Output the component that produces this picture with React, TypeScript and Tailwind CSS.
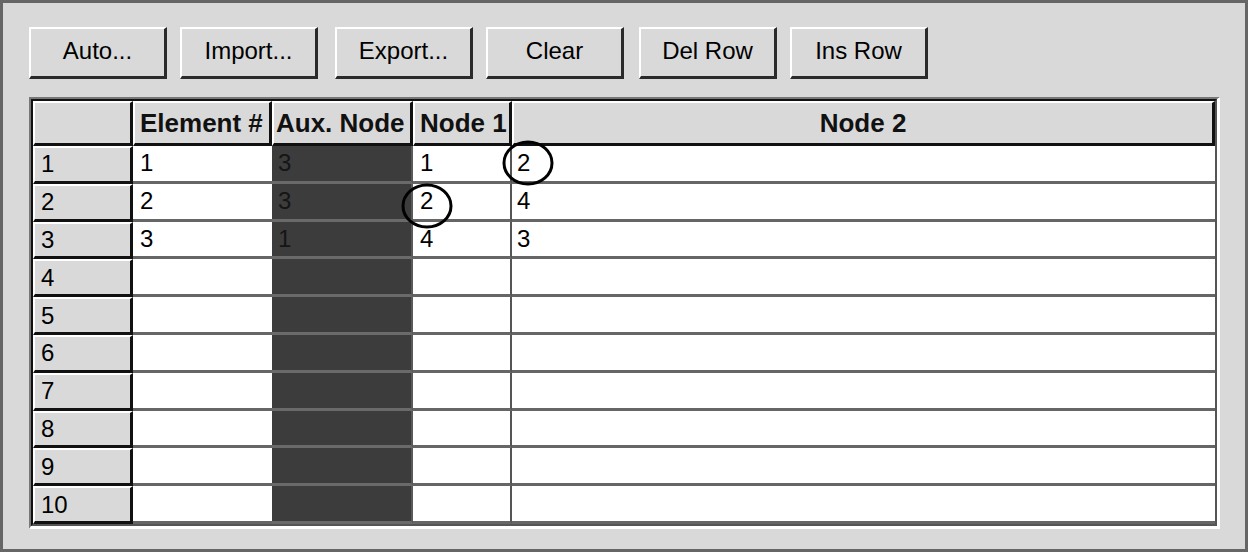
import React from "react";

const FONT = { fontFamily: '"Liberation Sans", Arial, sans-serif' };

const buttons: { label: string; ml: string }[] = [
  { label: "Auto...", ml: "" },
  { label: "Import...", ml: "ml-[13px]" },
  { label: "Export...", ml: "ml-[17px]" },
  { label: "Clear", ml: "ml-[13px]" },
  { label: "Del Row", ml: "ml-[15px]" },
  { label: "Ins Row", ml: "ml-[13px]" },
];

const data: [string, string, string, string][] = [
  ["1", "3", "1", "2"],
  ["2", "3", "2", "4"],
  ["3", "1", "4", "3"],
];

const headerCell =
  "flex items-center bg-[#d9d9d9] border-t-2 border-l-2 border-r-[3px] border-b-[3px] border-t-white border-l-white border-r-[#111] border-b-[#111] text-[26px] font-bold text-[#111] whitespace-nowrap overflow-hidden leading-none";

export default function App() {
  const rows = Array.from({ length: 10 }, (_, i) => i);
  return (
    <div
      className="relative w-[1248px] h-[552px] bg-[#d9d9d9] border-[3px] border-[#666] pl-[26px] pt-[24px]"
      style={FONT}
    >
      <div className="flex">
        {buttons.map((b) => (
          <div
            key={b.label}
            className={`${b.ml} w-[138px] h-[52px] flex items-center justify-center bg-[#d9d9d9] border-t-2 border-l-2 border-r-[3px] border-b-[3px] border-t-white border-l-white border-r-[#2a2a2a] border-b-[#2a2a2a] text-[24px] text-black leading-none`}
          >
            <span className="-mt-[3px]">{b.label}</span>
          </div>
        ))}
      </div>

      <div className="mt-[18px] w-[1191px] border-t-2 border-l-2 border-r-[3px] border-b-[3px] border-t-[#777] border-l-[#777] border-r-white border-b-white">
        <div className="border-t-2 border-l-2 border-r-2 border-b-2 border-t-[#111] border-l-[#111] border-r-[#555] border-b-[#555]">
          <div className="grid grid-cols-[100px_139px_141px_99px_703px] grid-rows-[45px_repeat(10,37.8px)]">
            <div className={headerCell}></div>
            <div className={`${headerCell} pl-[5px]`}>Element #</div>
            <div className={`${headerCell} pl-[2px]`}>Aux. Node</div>
            <div className={`${headerCell} pl-[5px]`}>Node 1</div>
            <div className={`${headerCell} justify-center`}>Node 2</div>

            {rows.map((i) => {
              const d = data[i];
              return (
                <React.Fragment key={i}>
                  <div className="flex items-center pl-[6px] bg-[#d9d9d9] border-t-2 border-l-2 border-r-[3px] border-b-[3px] border-t-white border-l-white border-r-[#111] border-b-[#111] text-[24px] text-black leading-none">
                    {i + 1}
                  </div>
                  <div className="flex items-center pl-[7px] bg-white border-b-[3px] border-b-[#666] text-[24px] text-black leading-none">
                    {d ? d[0] : ""}
                  </div>
                  <div className="flex items-center pl-[6px] bg-[#3c3c3c] border-b-[3px] border-b-[#6a6a6a] border-r-2 border-r-[#5a5a5a] text-[24px] text-[#151515] leading-none">
                    {d ? d[1] : ""}
                  </div>
                  <div className="flex items-center pl-[7px] bg-white border-b-[3px] border-b-[#666] border-r-2 border-r-[#555] text-[24px] text-black leading-none">
                    {d ? d[2] : ""}
                  </div>
                  <div className="flex items-center pl-[5px] bg-white border-b-[3px] border-b-[#666] text-[24px] text-black leading-none">
                    {d ? d[3] : ""}
                  </div>
                </React.Fragment>
              );
            })}
          </div>
        </div>
      </div>

      <svg
        className="absolute -left-[3px] -top-[3px] w-[1248px] h-[552px] pointer-events-none"
        viewBox="0 0 1248 552"
      >
        <ellipse cx="528" cy="163" rx="24" ry="21" fill="none" stroke="#000" strokeWidth="3" />
        <ellipse cx="427" cy="206" rx="24" ry="21" fill="none" stroke="#000" strokeWidth="3" />
      </svg>
    </div>
  );
}
